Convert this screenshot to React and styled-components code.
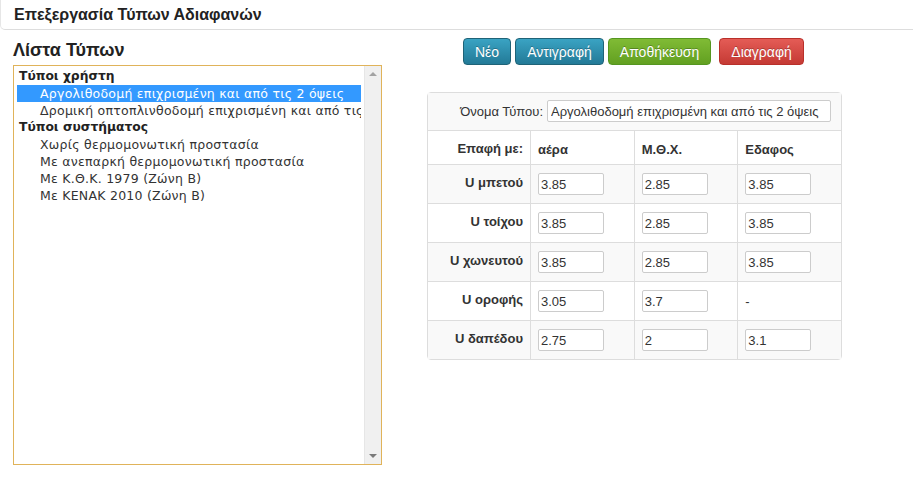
import styled, { createGlobalStyle } from 'styled-components';

const GlobalStyle = createGlobalStyle`
  html, body {
    margin: 0;
    padding: 0;
    background: #fff;
    font-family: "Liberation Sans", Arial, sans-serif;
    color: #333;
  }
`;

const userTypes = [
  'Αργολιθοδομή επιχρισμένη και από τις 2 όψεις',
  'Δρομική οπτοπλινθοδομή επιχρισμένη και από τις 2 όψεις',
];
const systemTypes = [
  'Χωρίς θερμομονωτική προστασία',
  'Με ανεπαρκή θερμομονωτική προστασία',
  'Με Κ.Θ.Κ. 1979 (Ζώνη Β)',
  'Με ΚΕΝΑΚ 2010 (Ζώνη Β)',
];

const rows = [
  { label: 'U μπετού', values: ['3.85', '2.85', '3.85'] },
  { label: 'U τοίχου', values: ['3.85', '2.85', '3.85'] },
  { label: 'U χωνευτού', values: ['3.85', '2.85', '3.85'] },
  { label: 'U οροφής', values: ['3.05', '3.7', null] },
  { label: 'U δαπέδου', values: ['2.75', '2', '3.1'] },
];

const App = () => {
  return (
    <>
      <GlobalStyle />
      <Page>
        <Header>Επεξεργασία Τύπων Αδιαφανών</Header>
        <Body>
          <LeftCol>
            <ListTitle>Λίστα Τύπων</ListTitle>
            <ListBox>
              <ListContent>
                <Group>Τύποι χρήστη</Group>
                {userTypes.map((t, i) => (
                  <Item key={t} selected={i === 0}>
                    {t}
                  </Item>
                ))}
                <Group>Τύποι συστήματος</Group>
                {systemTypes.map((t) => (
                  <Item key={t}>{t}</Item>
                ))}
              </ListContent>
              <ScrollBar>
                <Arrow up />
                <Arrow />
              </ScrollBar>
            </ListBox>
          </LeftCol>
          <RightCol>
            <Toolbar>
              <Button variant='info'>Νέο</Button>
              <Button variant='info'>Αντιγραφή</Button>
              <Button variant='success'>Αποθήκευση</Button>
              <Button variant='danger' gap>
                Διαγραφή
              </Button>
            </Toolbar>
            <Table>
              <tbody>
                <tr className='odd'>
                  <td colSpan={4} className='name'>
                    <NameRow>
                      <span>Όνομα Τύπου:</span>
                      <NameInput defaultValue='Αργολιθοδομή επιχρισμένη και από τις 2 όψεις' />
                    </NameRow>
                  </td>
                </tr>
                <tr>
                  <th>Επαφή με:</th>
                  <th className='col'>αέρα</th>
                  <th className='col'>Μ.Θ.Χ.</th>
                  <th className='col'>Εδαφος</th>
                </tr>
                {rows.map((r, i) => (
                  <tr key={r.label} className={i % 2 === 0 ? 'odd' : ''}>
                    <th>{r.label}</th>
                    {r.values.map((v, j) => (
                      <td key={j}>{v === null ? <Dash>-</Dash> : <ValueInput defaultValue={v} />}</td>
                    ))}
                  </tr>
                ))}
              </tbody>
            </Table>
          </RightCol>
        </Body>
      </Page>
    </>
  );
};

const Page = styled.div`
  width: 913px;
  height: 479px;
  overflow: hidden;
`;

const Header = styled.div`
  height: 30px;
  box-sizing: border-box;
  padding: 6px 0 0 13px;
  font-size: 16px;
  font-weight: bold;
  color: #222;
  border-bottom: 1px solid #ddd;
  border-left: 1px solid #e6e6e6;
  border-bottom-left-radius: 5px;
`;

const Body = styled.div`
  display: flex;
  padding-left: 13px;
`;

const LeftCol = styled.div`
  width: 369px;
`;

const ListTitle = styled.h2`
  margin: 9px 0 0;
  font-size: 18px;
  font-weight: bold;
  color: #222;
  line-height: 22px;
`;

const ListBox = styled.div`
  margin-top: 4px;
  height: 400px;
  box-sizing: border-box;
  border: 1px solid #e0b35a;
  display: flex;
`;

const ListContent = styled.div`
  flex: 1;
  min-width: 0;
  padding: 2px 3px 0 3px;
  font-family: "DejaVu Sans", Verdana, sans-serif;
  overflow: hidden;
  white-space: nowrap;
`;

const Group = styled.div`
  font-size: 12.3px;
  font-weight: bold;
  color: #222;
  padding-left: 2px;
  line-height: 17px;
`;

const Item = styled.div`
  font-size: 12.5px;
  letter-spacing: 0.25px;
  line-height: 17px;
  padding-left: 23px;
  overflow: hidden;
  color: ${(p) => (p.selected ? '#fff' : '#333')};
  background: ${(p) => (p.selected ? '#3399ff' : 'transparent')};
`;

const ScrollBar = styled.div`
  width: 16px;
  flex-shrink: 0;
  background: #f0f0f0;
  border-left: 1px solid #e6e6e6;
  display: flex;
  flex-direction: column;
  justify-content: space-between;
  align-items: center;
  padding: 6px 0;
`;

const Arrow = styled.div`
  width: 0;
  height: 0;
  border-left: 4px solid transparent;
  border-right: 4px solid transparent;
  ${(p) =>
    p.up ? 'border-bottom: 4px solid #a3a3a3;' : 'border-top: 4px solid #7a7a7a;'}
`;

const RightCol = styled.div`
  display: flex;
  flex-direction: column;
  margin-left: 45px;
`;

const Toolbar = styled.div`
  display: flex;
  gap: 4px;
  margin: 8px 0 0 36px;
`;

const colors = {
  info: ['#3aa3c3', '#237a97', '#1f6377'],
  success: ['#80bb35', '#62a021', '#559620'],
  danger: ['#e45c56', '#c53a34', '#b9302a'],
};

const Button = styled.div`
  height: 27px;
  box-sizing: border-box;
  padding: 0 11px;
  display: flex;
  align-items: center;
  font-size: 14px;
  color: #fff;
  border-radius: 4px;
  border: 1px solid ${(p) => colors[p.variant][2]};
  background: linear-gradient(
    to bottom,
    ${(p) => colors[p.variant][0]},
    ${(p) => colors[p.variant][1]}
  );
  text-shadow: 0 -1px 0 rgba(0, 0, 0, 0.25);
  margin-left: ${(p) => (p.gap ? '4px' : '0')};
`;

const Table = styled.table`
  margin-top: 27px;
  width: 415px;
  border-collapse: separate;
  border-spacing: 0;
  border: 1px solid #ddd;
  border-radius: 4px;
  font-size: 13px;
  color: #333;
  tr.odd > td,
  tr.odd > th {
    background: #f9f9f9;
  }
  td,
  th {
    border-top: 1px solid #ddd;
    border-left: 1px solid #ddd;
    padding: 8px 7px;
    vertical-align: top;
    text-align: left;
  }
  tr:first-child td {
    border-top: none;
    border-left: none;
  }
  th:first-child {
    border-left: none;
    text-align: right;
    width: 88px;
    padding-top: 10px;
  }
  th.col {
    padding-top: 11px;
    padding-bottom: 5px;
    height: 11px;
  }
  td {
    height: 22px;
  }
  td.name {
    padding: 7px 10px 6px 7px;
    height: 24px;
  }
`;

const NameRow = styled.div`
  display: flex;
  align-items: center;
  justify-content: flex-end;
  gap: 4px;
`;

const NameInput = styled.input`
  width: 284px;
  height: 22px;
  box-sizing: border-box;
  border: 1px solid #ccc;
  border-radius: 2px;
  padding: 0 3px;
  font-family: "Liberation Sans", Arial, sans-serif;
  font-size: 13px;
  color: #333;
  background: #fff;
`;

const ValueInput = styled.input`
  width: 66px;
  height: 22px;
  box-sizing: border-box;
  border: 1px solid #ccc;
  border-radius: 2px;
  padding: 0 2px;
  font-family: "Liberation Sans", Arial, sans-serif;
  font-size: 13px;
  color: #333;
  background: #fff;
  display: block;
`;

const Dash = styled.span`
  display: block;
  padding-top: 4px;
`;

export default App;
